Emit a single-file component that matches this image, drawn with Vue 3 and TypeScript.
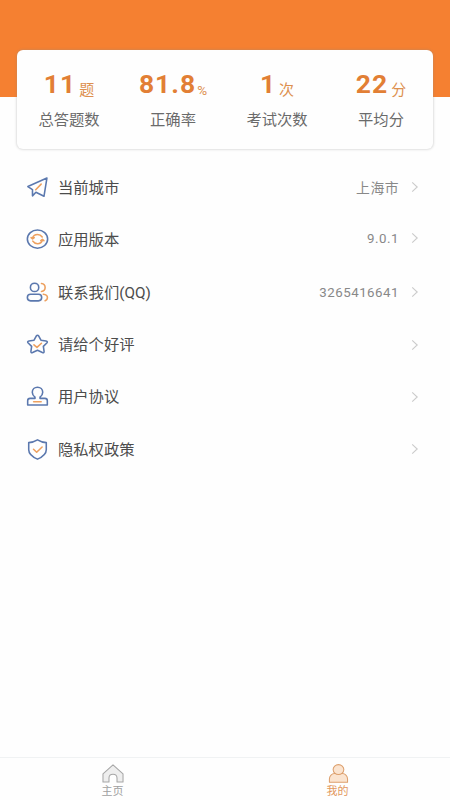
<script setup lang="ts">
interface Stat { value: string; unit: string; label: string }
interface Row { icon: string; label: string; value?: string }

const stats: Stat[] = [
  { value: '11', unit: '题', label: '总答题数' },
  { value: '81.8', unit: '%', label: '正确率' },
  { value: '1', unit: '次', label: '考试次数' },
  { value: '22', unit: '分', label: '平均分' },
]

const rows: Row[] = [
  { icon: 'plane', label: '当前城市', value: '上海市' },
  { icon: 'refresh', label: '应用版本', value: '9.0.1' },
  { icon: 'users', label: '联系我们(QQ)', value: '3265416641' },
  { icon: 'star', label: '请给个好评' },
  { icon: 'stamp', label: '用户协议' },
  { icon: 'shield', label: '隐私权政策' },
]
</script>

<template>
  <div class="page">
    <header class="hero">
      <section class="card">
        <div v-for="s in stats" :key="s.label" class="stat">
          <div class="figure"><span class="num">{{ s.value }}</span><span class="unit" :class="{ percent: s.unit === '%' }">{{ s.unit }}</span></div>
          <div class="caption">{{ s.label }}</div>
        </div>
      </section>
    </header>

    <main class="list">
      <div v-for="r in rows" :key="r.icon" class="row" :class="r.icon">
        <svg class="icon" viewBox="0 0 22 22">
          <template v-if="r.icon === 'plane'">
            <path d="M20 2 1.8 10.1 6.2 13v6l3.3-3.5 7.7 3.9Z" />
            <path class="accent" d="m9.3 13.2 5.2-5.4" />
          </template>
          <template v-else-if="r.icon === 'refresh'">
            <ellipse cx="11" cy="10.6" rx="9.7" ry="8.7" />
            <path class="accent" d="M6.3 9.4C7 7.3 8.8 6.2 11 6.2c2 0 3.5.9 4.5 2.4M15.7 11.8c-.7 2.1-2.5 3.2-4.7 3.2-2 0-3.5-.9-4.5-2.4M4.9 9.2l1.4 1.2 1.6-1.1M17.1 12.1l-1.4-1.2-1.6 1.1" />
          </template>
          <template v-else-if="r.icon === 'users'">
            <circle cx="8.2" cy="6.1" r="4" />
            <rect x="1.3" y="12.7" width="13.7" height="6.3" rx="3.1" />
            <path class="accent" d="M14.8 2.4c2.2.3 3.5 1.8 3.5 3.8s-1.3 3.4-3.5 3.8M16.5 12.6c2.8.2 4 1.6 4 3.3 0 1.5-.7 2.5-2.2 3" />
          </template>
          <template v-else-if="r.icon === 'star'">
            <path d="M9.8 2.9q1.2-1.6 2.4 0l2.1 4 4.9.8q2 .4.7 1.8l-3.3 3.3.7 4.7q.1 1.8-1.6 1.1L11 16.5l-4.7 2.1q-1.7.7-1.6-1.1l.7-4.7-3.3-3.3Q.8 8.1 2.8 7.7l4.9-.8Z" />
            <path class="accent" d="m7.6 11.3 2.9 2.5 4.3-4" />
          </template>
          <template v-else-if="r.icon === 'stamp'">
            <path d="M8.6 11.6C6.6 10 6 8.3 6 6.9 6 4 8.2 2.1 11 2.1s5 1.9 5 4.8c0 1.4-.6 3.1-2.6 4.7v1.2h4.7q2.3 0 2.3 2.2v4.2H1.6V15q0-2.2 2.3-2.2h4.7Z" />
            <path class="accent" d="M7.3 16h7.2" />
          </template>
          <template v-else>
            <path d="M11 1.8c2.7 1.7 5.4 2.5 8.4 2.6v6.8c0 4-3.4 6.8-8.4 9-5-2.2-8.4-5-8.4-9V4.4c3-.1 5.7-.9 8.4-2.6Z" />
            <path class="accent" d="m7.2 10.8 3 2.8 5.2-5" />
          </template>
        </svg>
        <span class="label">{{ r.label }}</span>
        <span class="detail">
          <span v-if="r.value" class="value">{{ r.value }}</span>
          <svg class="chevron" viewBox="0 0 8 12"><path d="m1.2 1.4 5 4.6-5 4.6" /></svg>
        </span>
      </div>
    </main>

    <nav class="tabs">
      <div class="tab">
        <svg viewBox="0 0 24 22"><path d="M1.5 11.5 12 2l10.5 9.5V20h-6.3v-4.3c0-2.5-1.6-4-4.2-4s-4.2 1.5-4.2 4V20H1.5Z" /></svg>
        <span>主页</span>
      </div>
      <div class="tab active">
        <svg viewBox="0 0 24 22"><path d="M3 20.2v-3.5c0-3.4 2.7-5.6 5.3-5.6h8.4c2.6 0 5.3 2.2 5.3 5.6v3.5Z" /><ellipse cx="12.5" cy="6.9" rx="5.6" ry="5.2" /></svg>
        <span>我的</span>
      </div>
    </nav>
  </div>
</template>

<style>
body { margin: 0; background: #fefefe; }
</style>

<style scoped>
.page {
  display: flex;
  flex-direction: column;
  height: 800px;
  font-family: Roboto, "Noto Sans CJK SC", sans-serif;
  background: #fefefe;
}
.hero {
  box-sizing: border-box;
  height: 97px;
  padding: 50px 17px 0;
  background: #f58031;
}
.card {
  box-sizing: border-box;
  display: grid;
  grid-template-columns: repeat(4, 1fr);
  height: 99px;
  border-radius: 6px;
  background: #fefefe;
  box-shadow: 0 0 2px 1px rgba(140, 140, 140, 0.26);
}
.stat {
  display: flex;
  flex-direction: column;
  align-items: center;
  padding-top: 18px;
}
.figure {
  display: flex;
  height: 32px;
  line-height: 32px;
  color: #e27f35;
}
.num {
  font-size: 26.5px;
  font-weight: 700;
  letter-spacing: 1px;
}
.unit {
  margin-left: 3px;
  padding-top: 6px;
  font-size: 15px;
  color: #dd904f;
}
.percent { margin-left: 1px; font-size: 13.5px; }
.caption {
  margin-top: 9px;
  font-size: 15.3px;
  line-height: 22px;
  color: #6a6a6a;
}
.list {
  flex: 1;
  padding: 64px 31px 0 26px;
}
.row {
  display: flex;
  align-items: center;
  height: 52.45px;
}
.icon {
  width: 23px;
  height: 23px;
  fill: none;
  stroke: #5b78ae;
  stroke-width: 1.5;
  stroke-linejoin: round;
  stroke-linecap: round;
}
.icon .accent { stroke: #eda05f; }
.label {
  margin-left: 9px;
  padding-bottom: 3px;
  font-size: 15.3px;
  color: #4c4c4c;
}
.detail {
  display: flex;
  align-items: center;
  margin-left: auto;
}
.refresh .detail { padding-bottom: 3px; }
.value {
  margin-right: 12px;
  font-size: 13.3px;
  letter-spacing: 0.5px;
  color: #888;
}
.plane .value { font-size: 13.8px; padding-bottom: 1px; }
.chevron {
  width: 8px;
  height: 12px;
  fill: none;
  stroke: #cbcbcb;
  stroke-width: 1.1;
}
.tabs {
  box-sizing: border-box;
  display: flex;
  height: 43px;
  border-top: 1px solid #f0f2f3;
}
.tab {
  flex: 1;
  display: flex;
  flex-direction: column;
  align-items: center;
  padding-top: 5px;
  font-size: 11px;
  line-height: 16px;
  color: #a0a0a0;
}
.tab svg {
  width: 24px;
  height: 22px;
  fill: #eee;
  stroke: #a6a6a6;
  stroke-width: 1.1;
  stroke-linejoin: round;
}
.tab.active { color: #e2975c; }
.tab.active svg { fill: #fbe4d0; stroke: #dda06e; }
</style>
